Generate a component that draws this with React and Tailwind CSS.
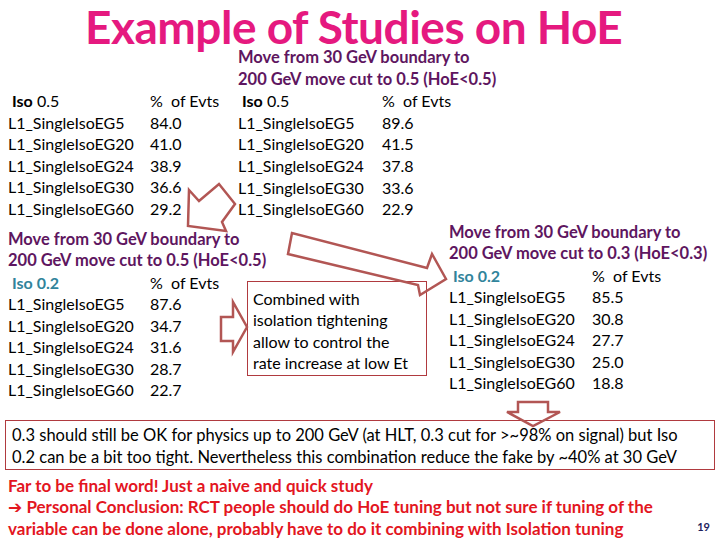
import React from 'react';

const font = { fontFamily: 'Lato, "Open Sans", sans-serif' };

const topLeft = [
  ['L1_SingleIsoEG5', '84.0'],
  ['L1_SingleIsoEG20', '41.0'],
  ['L1_SingleIsoEG24', '38.9'],
  ['L1_SingleIsoEG30', '36.6'],
  ['L1_SingleIsoEG60', '29.2'],
];
const topMid = [
  ['L1_SingleIsoEG5', '89.6'],
  ['L1_SingleIsoEG20', '41.5'],
  ['L1_SingleIsoEG24', '37.8'],
  ['L1_SingleIsoEG30', '33.6'],
  ['L1_SingleIsoEG60', '22.9'],
];
const bottomLeft = [
  ['L1_SingleIsoEG5', '87.6'],
  ['L1_SingleIsoEG20', '34.7'],
  ['L1_SingleIsoEG24', '31.6'],
  ['L1_SingleIsoEG30', '28.7'],
  ['L1_SingleIsoEG60', '22.7'],
];
const bottomRight = [
  ['L1_SingleIsoEG5', '85.5'],
  ['L1_SingleIsoEG20', '30.8'],
  ['L1_SingleIsoEG24', '27.7'],
  ['L1_SingleIsoEG30', '25.0'],
  ['L1_SingleIsoEG60', '18.8'],
];

const Heading = ({ cut }) => (
  <div className="font-bold text-[16.5px] text-[#5e1660]">
    <div>Move from 30 GeV boundary to</div>
    <div>200 GeV move cut to {cut} (HoE&lt;{cut})</div>
  </div>
);

const Table = ({ iso, teal, rows, col }) => (
  <div className="text-black">
    <div className="flex">
      <div className={`${col} pl-1`}>
        {teal ? (
          <span className="font-bold text-[#31849b]">Iso 0.2</span>
        ) : (
          <span><span className="font-bold">Iso</span> {iso}</span>
        )}
      </div>
      <div>%&nbsp; of Evts</div>
    </div>
    {rows.map(([name, val]) => (
      <div key={name} className="flex">
        <div className={col}>{name}</div>
        <div>{val}</div>
      </div>
    ))}
  </div>
);

const Arrows = () => (
  <svg className="absolute inset-0 pointer-events-none" width="720" height="540">
    <g fill="none" stroke="#b25654" strokeWidth="2.5" strokeLinejoin="miter">
      <polygon points="189,190 199,201 219,184 235,204 222,222 226,231 188,226" />
      <polygon points="292,233 288,254 418,285 420,295 446,279 432,254 427,268" />
      <polygon points="221,317 233,317 233,302 247,327 233,352 233,341 221,341" />
      <polygon points="518,402 548,402 548,412 560,412 533,426 507,412 518,412" />
    </g>
  </svg>
);

export default function App() {
  return (
    <div className="relative w-[720px] h-[540px] overflow-hidden bg-white" style={font}>
      <h1 className="w-fit ml-[85px] pt-[7px] h-[47px] text-[46px] leading-[40px] font-bold text-[#e5197f] tracking-[-0.5px]">
        Example of Studies on HoE
      </h1>

      <div className="flex text-[16px] leading-[21.6px]">
        <div className="w-[238px] pl-[8px] pt-[43px]">
          <Table iso="0.5" rows={topLeft} col="w-[142px]" />
        </div>
        <div>
          <Heading cut="0.5" />
          <Table iso="0.5" rows={topMid} col="w-[144px]" />
        </div>
      </div>

      <div className="flex mt-[2px] text-[16px] leading-[21.5px]">
        <div className="w-[449px] pl-[8px] pt-[7px]">
          <Heading cut="0.5" />
          <div className="flex">
            <div className="w-[239px]">
              <Table teal rows={bottomLeft} col="w-[142px]" />
            </div>
            <div className="mt-[9px] w-[180px] h-[95px] border border-[#b03a3f] pl-[5px] pt-[6px] text-black">
              <div>Combined with</div>
              <div>isolation tightening</div>
              <div>allow to control the</div>
              <div>rate increase at low Et</div>
            </div>
          </div>
        </div>
        <div>
          <Heading cut="0.3" />
          <Table teal rows={bottomRight} col="w-[143px]" />
        </div>
      </div>

      <div className="mx-[5px] mt-[19px] h-[50px] border border-[#b03a3f] pl-[6px] pt-[3px] text-[16.5px] leading-[22px] text-black">
        <div>0.3 should still be OK for physics up to 200 GeV (at HLT, 0.3 cut for &gt;~98% on signal) but Iso</div>
        <div>0.2 can be a bit too tight. Nevertheless this combination reduce the fake by ~40% at 30 GeV</div>
      </div>

      <div className="flex mt-[5px] pl-[8px] pr-[10px]">
        <div className="flex-1 text-[17px] leading-[21px] font-bold text-[#e3161f]">
          <div>Far to be final word! Just a naive and quick study</div>
          <div><span style={{ fontFamily: '"DejaVu Sans", sans-serif' }}>➔</span> Personal Conclusion: RCT people should do HoE tuning but not sure if tuning of the</div>
          <div>variable can be done alone, probably have to do it combining with Isolation tuning</div>
        </div>
        <div className="self-end pb-[3px] text-[11px] font-bold text-[#1f1f5e]">19</div>
      </div>

      <Arrows />
    </div>
  );
}
